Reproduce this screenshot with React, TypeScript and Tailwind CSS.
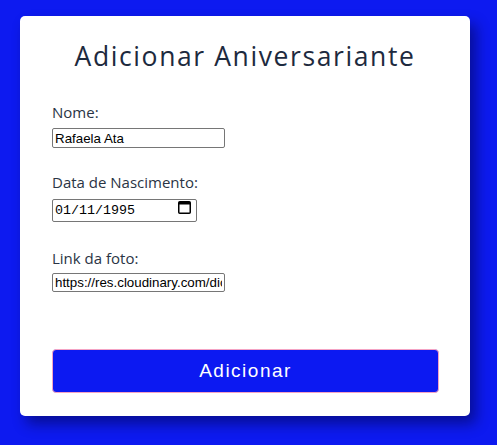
import { useState } from "react";

export default function App() {
  const [nome, setNome] = useState("Rafaela Ata");
  const [data, setData] = useState("01/11/1995");
  const [foto, setFoto] = useState("https://res.cloudinary.com/dio7ky1lq/image/upload/foto.jpg");

  return (
    <div className="min-h-[445px] bg-[#0d1af0] pt-4 pl-5 pr-[27px] pb-[30px]" style={{ fontFamily: '"Open Sans", "Noto Sans", sans-serif' }}>
      <div className="w-[450px] h-[400px] bg-white rounded-[5px] shadow-[6px_8px_14px_rgba(0,0,40,0.45)] px-8 pt-[22px]">
        <h1 className="text-center text-[26.5px] tracking-[1.6px] text-[#1d2a3e] leading-[36px]">
          Adicionar Aniversariante
        </h1>

        <form className="flex flex-col mt-[27px]" onSubmit={(e) => e.preventDefault()}>
          <label className="text-[15px] text-[#2a3444] leading-[22px]">Nome:</label>
          <input
            value={nome}
            onChange={(e) => setNome(e.target.value)}
            className="mt-[5px] w-[173px] h-[20px] border border-[#767676] rounded-[2px] px-[2px] text-[13.33px] text-black outline-none"
            style={{ fontFamily: '"Liberation Sans", Arial, sans-serif' }}
          />

          <label className="mt-[23px] text-[15px] text-[#2a3444] leading-[22px]">Data de Nascimento:</label>
          {/* campo de data com o ícone do calendário */}
          <div className="relative mt-[3px] w-[145px] h-[23px]">
            <input
              value={data}
              onChange={(e) => setData(e.target.value)}
              className="w-full h-full border border-[#767676] rounded-[2px] pl-[2px] pr-6 text-[13.33px] text-black outline-none"
              style={{ fontFamily: '"Liberation Mono", monospace' }}
            />
            <svg className="absolute right-[6px] top-[4px]" width="13" height="14" viewBox="0 0 13 14">
              <rect x="0.75" y="1.75" width="11.5" height="11.5" rx="1" fill="none" stroke="#000" strokeWidth="1.5" />
              <rect x="1" y="2" width="11" height="2.5" fill="#000" />
            </svg>
          </div>

          <label className="mt-[28px] text-[15px] text-[#2a3444] leading-[22px]">Link da foto:</label>
          <input
            value={foto}
            onChange={(e) => setFoto(e.target.value)}
            className="mt-[4px] w-[173px] h-[19px] border border-[#767676] rounded-[2px] px-[2px] text-[13.33px] text-black outline-none"
            style={{ fontFamily: '"Liberation Sans", Arial, sans-serif' }}
          />

          <button
            type="submit"
            className="mt-[57px] w-[387px] h-[44px] bg-[#0c19f2] border border-[#f4a3c4] rounded-[4px] text-white text-[19px] tracking-[1.5px]"
            style={{ fontFamily: '"Liberation Sans", Arial, sans-serif' }}
          >
            Adicionar
          </button>
        </form>
      </div>
    </div>
  );
}
